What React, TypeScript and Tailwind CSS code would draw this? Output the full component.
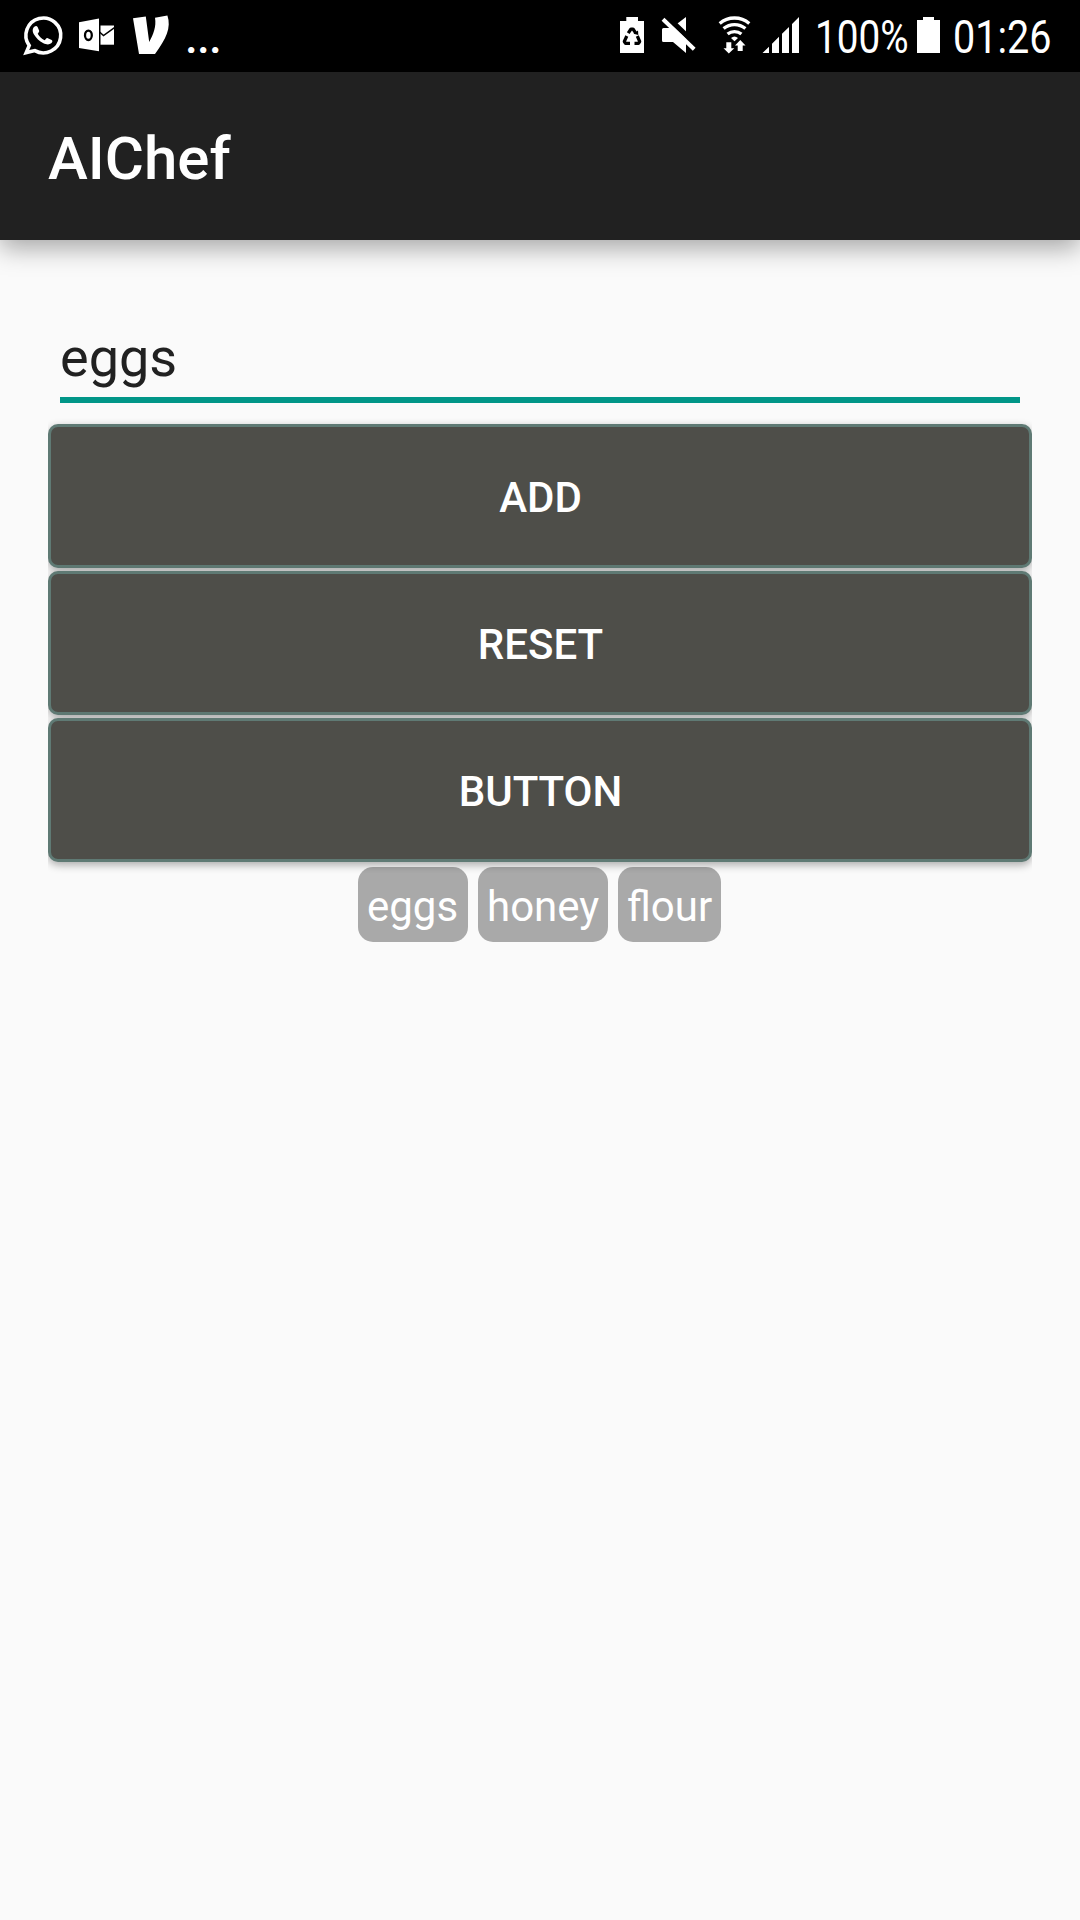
import React from "react";

function NotificationIcons() {
  return (
    <svg width="180" height="72" viewBox="0 0 180 72" className="shrink-0" fill="#fff">
      <path d="M29.2 45.6A17.4 17.4 0 1 1 34.8 50.6L26.2 52.6Z" fill="none" stroke="#fff" strokeWidth="3.6" strokeLinejoin="miter" />
      <path d="M34.3 26.8C35.5 25.7 37 25.8 37.6 27L39.2 30.7C39.5 31.6 38.2 33 37.7 33.8C39.4 36.9 41.5 38.8 44.6 40.2C45.4 39.5 46.3 37.7 47.3 37.9L51.7 40C53 40.8 52.2 42.5 51.2 43.3C48.8 45.2 45.9 44.3 43.4 43.2C39.2 41.3 36.2 38.1 34 34.5C32.5 31.8 32 29 34.3 26.8Z" />
      <path d="M79 22.2L99 18.6V51.2L79 48Z" />
      <ellipse cx="88.4" cy="35.3" rx="3.4" ry="4.7" fill="none" stroke="#000" strokeWidth="2.3" />
      <path d="M100.5 25.5H114V44.7H100.5Z" />
      <path d="M99.5 32L103.5 35.6L114.5 27.6" fill="none" stroke="#000" strokeWidth="1.5" />
      <path d="M133 18.2L145.8 16.4L149.2 42C153.4 34.5 156.5 26.5 155 17.8L167.4 15.6C171.5 28 166 39 155 54H139Z" />
    </svg>
  );
}

function SystemIcons() {
  return (
    <svg width="184" height="72" viewBox="618 0 184 72" fill="#fff">
      <path d="M620 21H626.3V17H638V21H644V53H620Z" />
      <g fill="none" stroke="#000" strokeWidth="3.2" strokeLinejoin="round">
        <path d="M628.200 33.200L631 29H633L635.800 33.200" />
        <path d="M626.800 36L624.300 41.500L625.500 43.300H630" />
        <path d="M637.300 36L639.700 41.500L638.500 43.300H634.500" />
      </g>
      <path d="M633.500 33.800L638.300 35L638 30.500Z" fill="#000" />
      <path d="M662 29.5Q662 28 663.5 28H671.5L686 17V53L673 42H663.5Q662 42 662 40.500Z" />
      <path d="M665.5 15.500L697.500 46.300" stroke="#000" strokeWidth="5.500" />
      <path d="M663 19.300L694.200 49.300" stroke="#fff" strokeWidth="4" />
      <g fill="none" stroke="#fff" strokeWidth="3.300">
        <path d="M719.700 23.400A23 23 0 0 1 749.300 23.400" />
        <path d="M723.600 28.600A17 17 0 0 1 745.400 28.600" />
        <path d="M727.600 34A11 11 0 0 1 741.400 34" />
      </g>
      <path d="M731 38Q734.500 34.800 738 38L734.500 41.300Z" />
      <path d="M726.300 42.300H731.300V48.300H734.300L728.800 53.500L723.500 48.300H726.300Z" />
      <path d="M737.700 51V45.500H735L740.300 40L745.500 45.500H742.700V51Z" />
      <path d="M762.500 53L769 46.700V53ZM772 43.700L779 36.800V53H772ZM782 33.800L789 27V53H782ZM792 24L799 17V53H792Z" />
    </svg>
  );
}

function StatusBar() {
  return (
    <div className="flex h-[72px] items-center bg-black text-[46px] leading-[60px] text-white">
      <NotificationIcons />
      <span className="ml-[5px] pt-[2px] font-medium tracking-[-0.8px]">...</span>
      <div className="ml-auto flex h-[72px] items-center">
        <SystemIcons />
        <span className="ml-[13px] w-[97px] origin-left scale-x-[0.842] whitespace-nowrap pt-[1px]">100%</span>
        <svg width="23" height="36" viewBox="0 0 23 36" className="ml-[5px] mb-[2px]" fill="#fff">
          <path d="M0 3H6V0H17V3H23V36H0Z" />
        </svg>
        <span className="ml-[13px] w-[127px] origin-left scale-x-[0.86] whitespace-nowrap pt-[1px]">01:26</span>
      </div>
    </div>
  );
}

function ActionButton({ label }: { label: string }) {
  return (
    <button className="h-[144px] w-full shrink-0 rounded-[10px] border-[3px] border-[#5f7a74] bg-[#4e4e49] pl-[1px] pt-[4px] text-[42px] font-medium leading-[50px] text-white shadow-[0_3px_8px_rgba(0,0,0,0.32)]">
      {label}
    </button>
  );
}

function Chip({ label, width }: { label: string; width: string }) {
  return (
    <span className={`${width} h-[75px] whitespace-nowrap rounded-[15px] bg-black/32 px-[9px] pt-[15px] text-[42px] leading-[50px] text-white`}>
      {label}
    </span>
  );
}

export default function App() {
  return (
    <div className="flex h-[1920px] w-[1080px] flex-col overflow-hidden bg-[#fafafa] font-['Roboto',sans-serif]">
      <StatusBar />
      <header className="flex h-[168px] shrink-0 items-center bg-[#212121] px-[48px] text-[60px] font-medium leading-[70px] text-white shadow-[0_8px_24px_rgba(0,0,0,0.34)]">
        <h1 className="pt-[6px]">AIChef</h1>
      </header>
      <main className="flex flex-col px-[48px] pt-[72px]">
        <div className="mx-[12px] h-[91px] border-b-[6px] border-[#009688] pt-[14px] text-[54px] leading-[64px] text-[#212121]">
          eggs
        </div>
        <div className="-mb-[15px] flex flex-col gap-[3px] overflow-hidden pb-[20px] pt-[21px]">
          <ActionButton label="ADD" />
          <ActionButton label="RESET" />
          <ActionButton label="BUTTON" />
        </div>
        <div className="z-10 flex justify-center gap-[10px] pr-[1px]">
          <Chip label="eggs" width="w-[110px]" />
          <Chip label="honey" width="w-[130px]" />
          <Chip label="flour" width="w-[103px]" />
        </div>
      </main>
    </div>
  );
}
